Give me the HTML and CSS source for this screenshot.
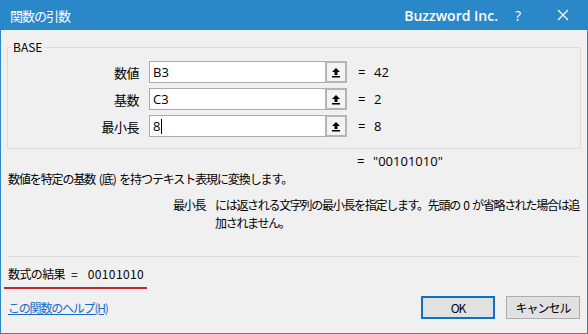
FILE: index.html
```html
<!DOCTYPE html>
<html>
<head>
  <meta charset="UTF-8">
  <meta name="viewport" content="width=device-width, initial-scale=1.0">
  <title>関数の引数</title>
  <link rel="stylesheet" href="styles.css">
</head>
<body>
  <div class="window">
    <div class="titlebar">
      <span class="title">関数の引数</span>
      <span class="brand">Buzzword Inc.</span>
      <span class="help">?</span>
      <span class="close">
        <svg width="12" height="12" viewBox="0 0 12 12"><path d="M1 1L11 11M11 1L1 11" stroke="#fff" stroke-width="1.2"/></svg>
      </span>
    </div>

    <div class="content">
      <fieldset class="group">
        <legend>BASE</legend>
        <div class="args">
          <label class="arg-label">数値</label>
          <div class="arg-box"><span class="arg-text">B3</span><span class="ref-btn"><svg width="10" height="11" viewBox="0 0 10 11"><path d="M5 1L1 5H3.5V8H6.5V5H9Z" fill="#000"/><rect x="1" y="9" width="8" height="1.5" fill="#000"/></svg></span></div>
          <div class="arg-value"><span class="eq">=</span>42</div>

          <label class="arg-label">基数</label>
          <div class="arg-box"><span class="arg-text">C3</span><span class="ref-btn"><svg width="10" height="11" viewBox="0 0 10 11"><path d="M5 1L1 5H3.5V8H6.5V5H9Z" fill="#000"/><rect x="1" y="9" width="8" height="1.5" fill="#000"/></svg></span></div>
          <div class="arg-value"><span class="eq">=</span>2</div>

          <label class="arg-label">最小長</label>
          <div class="arg-box"><span class="arg-text">8<span class="caret"></span></span><span class="ref-btn"><svg width="10" height="11" viewBox="0 0 10 11"><path d="M5 1L1 5H3.5V8H6.5V5H9Z" fill="#000"/><rect x="1" y="9" width="8" height="1.5" fill="#000"/></svg></span></div>
          <div class="arg-value"><span class="eq">=</span>8</div>
        </div>
      </fieldset>

      <div class="total"><span class="eq">=</span>"00101010"</div>

      <p class="desc">数値を特定の基数 (底) を持つテキスト表現に変換します。</p>

      <div class="arg-desc">
        <span class="arg-name">最小長</span>
        <span class="arg-help">には返される文字列の最小長を指定します。先頭の 0 が省略された場合は追加されません。</span>
      </div>

      <div class="divider"></div>

      <div class="result"><span class="result-label">数式の結果</span><span class="result-eq">=</span><span class="result-num">00101010</span></div>

      <div class="footer">
        <a class="help-link" href="#">この関数のヘルプ(H)</a>
        <div class="buttons">
          <button class="btn btn-primary">OK</button>
          <button class="btn">キャンセル</button>
        </div>
      </div>
    </div>
  </div>
</body>
</html>
```

FILE: styles.css
```css
html, body {
  margin: 0;
  padding: 0;
}
body {
  font-family: "Noto Sans CJK JP", "Noto Sans", sans-serif;
  font-size: 12px;
  color: #000;
  background: #f0f0f0;
}
.window {
  width: 588px;
  height: 334px;
  box-sizing: border-box;
  border: 1px solid #2b88c8;
  border-top: none;
  background: #f0f0f0;
}
.titlebar {
  height: 30px;
  margin: 0 -1px;
  background: #2b88c8;
  color: #fff;
  display: flex;
  align-items: center;
  padding: 0 0 0 10px;
}
.title {
  font-size: 13px;
  letter-spacing: -1px;
  flex: 1;
}
.brand {
  font-family: "Open Sans", "Noto Sans", sans-serif;
  font-weight: 600;
  font-size: 14px;
}
.help {
  font-family: "Open Sans", sans-serif;
  font-size: 14px;
  margin-left: 14px;
  width: 12px;
  text-align: center;
}
.close {
  width: 40px;
  display: flex;
  justify-content: center;
  margin: 0 5px 0 19px;
}
.content {
  padding: 10px 6px 0 6px;
}
.group {
  margin: 0;
  padding: 7px 0 11px 0;
  border: 1px solid #dcdcdc;
}
.group legend {
  font-size: 12px;
  padding: 0 2px;
  margin-left: 3px;
  line-height: 14px;
}
.args {
  display: grid;
  grid-template-columns: 131px 198px auto;
  grid-auto-rows: 22px;
  column-gap: 10px;
  row-gap: 5px;
  align-items: center;
}
.arg-label {
  text-align: right;
  font-size: 13px;
  letter-spacing: -0.5px;
}
.arg-box {
  height: 22px;
  box-sizing: border-box;
  border: 1px solid #ababab;
  background: #fff;
  display: flex;
  align-items: center;
  justify-content: space-between;
}
.arg-text {
  font-family: "Open Sans", "Noto Sans", sans-serif;
  font-size: 13px;
  padding-left: 3px;
  display: flex;
  align-items: center;
}
.caret {
  display: inline-block;
  width: 1px;
  height: 15px;
  background: #000;
  margin-left: 1px;
}
.ref-btn {
  width: 22px;
  height: 22px;
  box-sizing: border-box;
  border: 2px solid #b4b4b4;
  margin-right: -1px;
  background: #f3f3f3;
  display: flex;
  align-items: center;
  justify-content: center;
}
.arg-value, .total {
  font-family: "Open Sans", "Noto Sans", sans-serif;
  font-size: 13px;
}
.eq {
  display: inline-block;
  width: 16px;
}
.arg-value .eq {
  margin-left: 1px;
}
.total {
  margin: 3px 0 0 350px;
  height: 18px;
}
.desc {
  margin: 0 0 0 1px;
  font-size: 12px;
  letter-spacing: -1.1px;
  word-spacing: 2px;
  line-height: 18px;
}
.arg-desc {
  display: flex;
  margin: 8px 0 0 166px;
  line-height: 18px;
  letter-spacing: -1.3px;
  word-spacing: 2px;
}
.arg-name {
  width: 42px;
  flex: none;
}
.arg-help {
  width: 372px;
}
.divider {
  height: 1px;
  background: #dcdcdc;
  margin: 24px 1px 0 1px;
}
.result {
  display: inline-flex;
  margin: 8px 0 0 -3px;
  padding: 0 3px 4px 4px;
  font-size: 12px;
  border-bottom: 2px solid #c0282d;
  line-height: 18px;
}
.result-label {
  letter-spacing: -0.6px;
}
.result-eq {
  margin: 0 10px 0 6px;
}
.result-num {
  letter-spacing: 0.4px;
}
.footer {
  display: flex;
  justify-content: space-between;
  align-items: center;
  margin-top: 7px;
}
.help-link {
  color: #1a6bc0;
  font-size: 12px;
  letter-spacing: -1.2px;
  margin-left: 1px;
}
.buttons {
  display: flex;
  gap: 11px;
  margin-right: 1px;
}
.btn {
  width: 74px;
  height: 23px;
  font-family: "Noto Sans CJK JP", "Noto Sans", sans-serif;
  font-size: 12px;
  letter-spacing: -1px;
  background: #e1e1e1;
  border: 1px solid #adadad;
  padding: 0;
}
.btn-primary {
  border: 2px solid #0a72c9;
}
```
